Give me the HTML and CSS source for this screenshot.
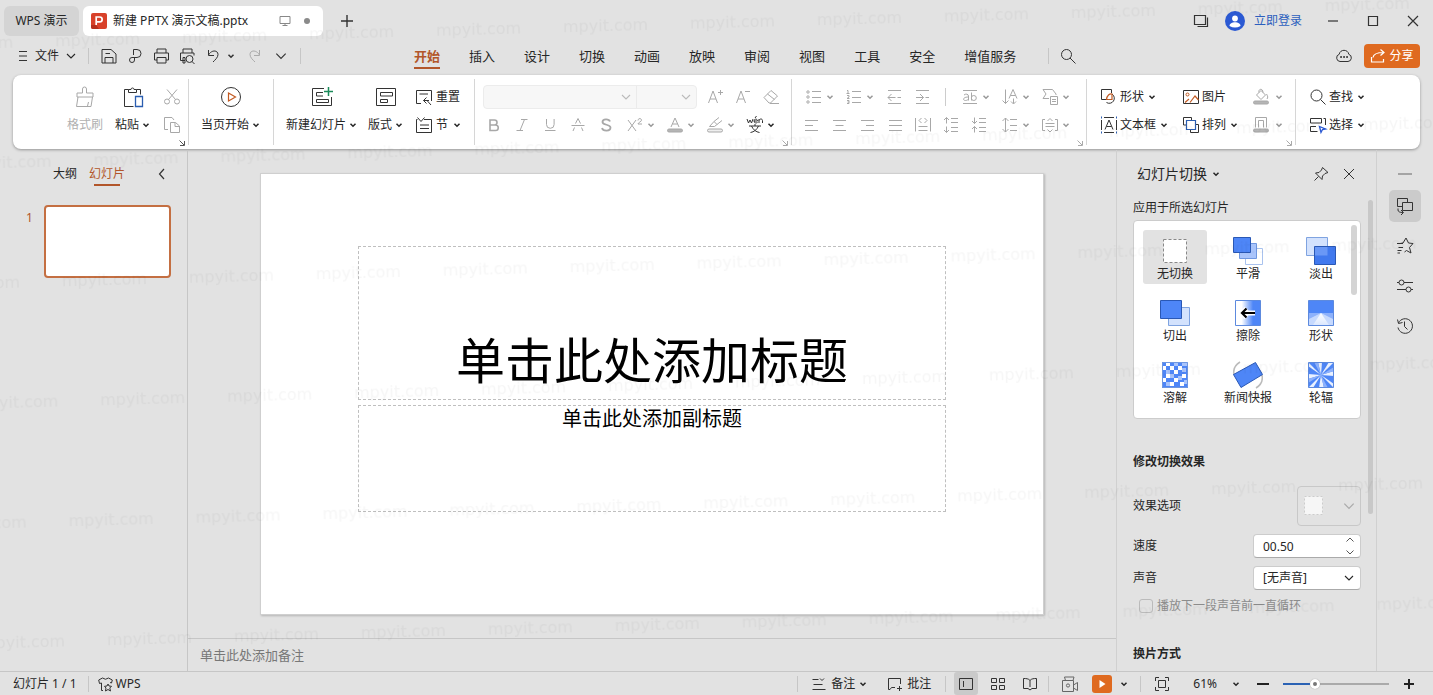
FILE: index.html
```html
<!DOCTYPE html>
<html lang="zh-CN">
<head>
<meta charset="utf-8">
<title>新建 PPTX 演示文稿.pptx - WPS 演示</title>
<link rel="stylesheet" href="styles.css">
</head>
<body>
<svg class="defs" aria-hidden="true">
  <symbol id="caret" viewBox="0 0 8 8"><path d="M1.5 2.7 4 5.2 6.5 2.7" fill="none" stroke="currentColor" stroke-width="1.5"/></symbol>
  <symbol id="chevron" viewBox="0 0 12 12"><path d="M2 4 6 8 10 4" fill="none" stroke="currentColor" stroke-width="1.1"/></symbol>
  <symbol id="launcher" viewBox="0 0 8 8"><path d="M1.5 1.5 6 6M6.5 2v4.5H2" fill="none" stroke="currentColor"/></symbol>
</svg>

<header class="titlebar">
  <button class="home-tab">WPS 演示</button>
  <div class="doc-tab">
    <svg class="logo" viewBox="0 0 16 16"><rect width="16" height="16" rx="2" fill="#d8412a"/><path d="M0 12h5l3 4H2a2 2 0 0 1-2-2z" fill="#b52f1d"/><path d="M5.2 12V4h3.5a2.4 2.4 0 0 1 0 4.9H5.2" fill="none" stroke="#fff" stroke-width="1.7"/></svg>
    <span class="doc-name">新建 PPTX 演示文稿.pptx</span>
    <svg class="monitor" viewBox="0 0 12 12"><path d="M1 1.5h10v7H1zM6 8.500v2M3.500 10.500h5" fill="none" stroke="#888"/></svg>
    <span class="unsaved"></span>
  </div>
  <button class="ico-btn new-tab" aria-label="新建标签"><svg class="i16" viewBox="0 0 16 16"><path d="M8 2v12M2 8h12" stroke="#333" stroke-width="1.4"/></svg></button>
  <span class="grow"></span>
  <button class="ico-btn" aria-label="窗口"><svg class="i20" viewBox="0 0 20 20"><path d="M3.500 4.500h11v9h-11zM6.500 15.500h10v-9" fill="none" stroke="#333" stroke-width="1.2"/></svg></button>
  <a class="login" href="#"><svg class="i20" viewBox="0 0 20 20"><circle cx="10" cy="10" r="10" fill="#2b59d3"/><circle cx="10" cy="7.500" r="2.900" fill="#fff"/><path d="M4.500 15c0-5 11-5 11 0q-5.500 3-11 0" fill="#fff"/></svg>立即登录</a>
  <button class="ico-btn win" aria-label="最小化"><svg class="i20" viewBox="0 0 20 20"><path d="M5 10h10" stroke="#333" stroke-width="1.200"/></svg></button>
  <button class="ico-btn win" aria-label="最大化"><svg class="i20" viewBox="0 0 20 20"><path d="M5.500 5.500h9v9h-9z" fill="none" stroke="#333" stroke-width="1.200"/></svg></button>
  <button class="ico-btn win" aria-label="关闭"><svg class="i20" viewBox="0 0 20 20"><path d="m5 5 10 10M15 5 5 15" stroke="#333" stroke-width="1.200"/></svg></button>
</header>

<nav class="menubar">
  <button class="file-menu"><svg class="i12" viewBox="0 0 12 12"><path d="M2 1.500h8M2 6h8M2 10.500h8" stroke="#333"/></svg>文件<svg class="i12"><use href="#chevron"/></svg></button>
  <span class="vline"></span>
  <div class="quick">
    <button class="q" aria-label="保存"><svg class="i20" viewBox="0 0 20 20"><path d="M3 3.500h9l5 4.500v9H3zM6 17v-5.500h8V17M6.500 7.500H11" /></svg></button>
    <button class="q" aria-label="输出为PDF"><svg class="i20" viewBox="0 0 20 20"><path d="M8.500 9V3.500H12a4 4 0 0 1 0 8H7a2.500 2.500 0 1 0 2.500 2.500v-2.500"/></svg></button>
    <button class="q" aria-label="打印"><svg class="i20" viewBox="0 0 20 20"><path d="M6 7V3h9v4M6 14H3.500V7h14v7H15M6 11.500h9V17H6z"/></svg></button>
    <button class="q" aria-label="打印预览"><svg class="i20" viewBox="0 0 20 20"><path d="M6 7V3h9v4M8 14.500H3.500V7h13.500v2.500M6 11.500h2V17H6v-5.500"/><circle cx="12.500" cy="13" r="3.500"/><path d="m15 15.500 2.500 2.500"/></svg></button>
    <button class="q" aria-label="撤销"><svg class="i20" viewBox="0 0 20 20"><path d="M5.500 4v5.500H11M5.500 9c3-5.500 9.500-5 9.500-.5 0 3-3 5.500-5 7.500"/></svg></button>
    <svg class="caret"><use href="#caret"/></svg>
    <button class="q dim redo" aria-label="恢复"><svg class="i20" viewBox="0 0 20 20"><path d="M14.500 4v5.500H9M14.500 9C11.500 3.500 5 4 5 8.500c0 3 3 5.500 5 7.500"/></svg></button>
    <button class="q" aria-label="更多"><svg class="i14" viewBox="0 0 12 12"><path d="M2 4 6 8 10 4"/></svg></button>
  </div>
  <span class="vline"></span>
  <div class="tabs">
    <button class="tab active">开始</button><button class="tab">插入</button><button class="tab">设计</button><button class="tab">切换</button><button class="tab">动画</button><button class="tab">放映</button><button class="tab">审阅</button><button class="tab">视图</button><button class="tab">工具</button><button class="tab">安全</button><button class="tab">增值服务</button>
  </div>
  <span class="vline tabs-end"></span>
  <button class="ico-btn" aria-label="搜索"><svg class="i20 line" viewBox="0 0 20 20"><circle cx="8.500" cy="8.500" r="5"/><path d="m12 12 5.500 5.500"/></svg></button>
  <span class="grow"></span>
  <button class="ico-btn" aria-label="云状态"><svg class="i20 line" viewBox="0 0 20 20"><path d="M6 15.500a3.700 3.700 0 0 1-.8-7.200C6 3 14 3 14.800 8.300a3.700 3.700 0 0 1-.8 7.200z"/><path d="M6.300 11h1.500M9.300 11h1.500M12.300 11h1.500" stroke-width="1.800"/></svg></button>
  <button class="share"><svg class="i16" viewBox="0 0 16 16"><path d="M1.500 9v5h12v-3M3 9.500C3.500 6 7 4.500 13.500 4.500M10.500 1.500l3.500 3-3.500 3" fill="none" stroke="#fff" stroke-width="1.200"/></svg>分享</button>
</nav>

<section class="ribbon" aria-label="开始">
  <div class="group g-clip">
    <button class="big dim" disabled><svg class="i24" viewBox="0 0 24 24"><path d="M9.500 8V4a2 2 0 0 1 4 0v4H20v4H4V8zM5 12l-1.500 9.500H18l1.500-9.500M15.500 17l-1 4"/></svg><span>格式刷</span></button>
    <button class="big paste"><svg class="i24" viewBox="0 0 24 24"><path d="M7.500 4.500h-4v17h9M15.500 4.500h4v5"/><path d="M7.500 7.500v-3h2.500a1.500 1.500 0 0 1 3 0h2.500v3z"/><path d="M14.500 11.500h7v10h-7z" stroke="#2a5db0" stroke-width="1.300"/></svg><span>粘贴<svg class="caret"><use href="#caret"/></svg></span></button>
    <div class="stack">
      <button class="s dim" disabled aria-label="剪切"><svg class="i20" viewBox="0 0 20 20"><circle cx="5" cy="14.500" r="2.500"/><circle cx="15" cy="14.500" r="2.500"/><path d="M5 2.500 13.500 12.500M15 2.500 6.500 12.500"/></svg></button>
      <button class="s dim" disabled aria-label="复制"><svg class="i20" viewBox="0 0 20 20"><path d="M6 14.500H2.500v-12H10l2 2.500M8.500 7.500h5l4 3.500v6.500h-9zM13 7.500v4h4.500"/></svg></button>
    </div>
    <svg class="launch dark"><use href="#launcher"/></svg>
  </div>
  <div class="group g-play">
    <button class="big"><svg class="i24" viewBox="0 0 24 24"><circle cx="12" cy="12" r="9.500"/><path d="M9.500 8v8l7-4z" stroke="#c25a22" stroke-width="1.200"/></svg><span>当页开始<svg class="caret"><use href="#caret"/></svg></span></button>
  </div>
  <div class="group g-slide">
    <button class="big"><svg class="i24" viewBox="0 0 24 24"><path d="M14 3.500H2.500v17h19V12"/><path d="M13 7.500H6.500v3.500H13M17 14.500H6.500v3h12v-3z"/><path d="M18.500 2v9M14 6.500h9" stroke="#1b8a5a" stroke-width="1.500"/></svg><span>新建幻灯片<svg class="caret"><use href="#caret"/></svg></span></button>
    <button class="big"><svg class="i24" viewBox="0 0 24 24"><path d="M2.500 3.500h19v17h-19z"/><path d="M6.500 7.500h12v3.500h-12zM6.500 14.500h7v3h-7z"/></svg><span>版式<svg class="caret"><use href="#caret"/></svg></span></button>
    <div class="stack">
      <button class="row-btn"><svg class="i20" viewBox="0 0 20 20"><path d="M7 16.500H2.500v-13h15V14M5.500 7H14"/><path d="m17 18-4-4.500M9.500 13.500H15M9.500 13.500l3-3M9.500 13.500l3 3"/></svg>重置</button>
      <button class="row-btn"><svg class="i20" viewBox="0 0 20 20"><path d="M3.500 4.500h-1v13h15v-13H10M6 10h9M6 13.500h9M3.500 2.500l3.500 4 3.500-4"/></svg>节<svg class="caret"><use href="#caret"/></svg></button>
    </div>
  </div>
  <div class="group g-font">
    <div class="row">
      <div class="fonts"><select class="combo wide" aria-label="字体" disabled><option></option></select><svg class="i12"><use href="#chevron"/></svg><select class="combo" aria-label="字号" disabled><option></option></select><svg class="i12"><use href="#chevron"/></svg></div>
      <button class="s dim" disabled aria-label="增大字号"><svg class="i20" viewBox="0 0 20 20"><path d="m3.500 16 4.500-12 4.500 12M5 12h6M13 5.500h5M15.500 3v5"/></svg></button>
      <button class="s dim" disabled aria-label="减小字号"><svg class="i20" viewBox="0 0 20 20"><path d="m3.500 16 4.500-12 4.500 12M5 12h6M12 4.500h5"/></svg></button>
      <button class="s dim" disabled aria-label="清除格式"><svg class="i20" viewBox="0 0 20 20"><path d="m3 10.500 7-7 6.500 5.500-7 7H8zM6.500 7l7 5.500M9 16.500h9"/></svg></button>
    </div>
    <div class="row">
      <button class="s dim" disabled aria-label="加粗"><svg class="i20" viewBox="0 0 20 20"><path d="M6 5h4.500a2.400 2.400 0 0 1 0 5H6zM6 10h5.500a2.500 2.500 0 0 1 0 5.500H6z" stroke-width="1.600"/></svg></button>
      <button class="s dim" disabled aria-label="倾斜"><svg class="i20" viewBox="0 0 20 20"><path d="M9 4.500h6.500M4.500 15.500H11M12.500 4.500 8 15.500"/></svg></button>
      <button class="s dim" disabled aria-label="下划线"><svg class="i20" viewBox="0 0 20 20"><path d="M6.500 4v5.500a3.800 3.800 0 0 0 7.600 0V4M5 15.500h10.500"/></svg></button>
      <button class="s dim" disabled aria-label="删除线"><svg class="i20" viewBox="0 0 20 20"><path d="M3.500 10.500h13M7.500 8.500l2.500-5 2.500 5M6.500 12.500 5 16M13.500 12.500l1.500 3.500"/></svg></button>
      <button class="s dim" disabled aria-label="阴影"><svg class="i20" viewBox="0 0 20 20"><path d="M14 6.500C13 3.500 6.500 3.500 6.500 7c0 3.500 8 2 8 5.500 0 4-7.500 4-8.500.5" stroke-width="1.800"/></svg></button>
      <button class="m dim" disabled aria-label="上标"><svg class="i20" viewBox="0 0 20 20"><path d="m3 5 8 11M11 5 3 16M13 5.500c0-2.500 3.500-2.500 3.500-.3 0 1.500-3.500 2.300-3.500 3.800H17"/></svg><svg class="caret"><use href="#caret"/></svg></button>
      <button class="m dim" disabled aria-label="字体颜色"><svg class="i20" viewBox="0 0 20 20"><path d="m6 12 4-9 4 9M7.500 9h5"/><rect x="2.500" y="14" width="15" height="3" rx="1.500" fill="#b5b5b5"/></svg><svg class="caret"><use href="#caret"/></svg></button>
      <button class="m dim" disabled aria-label="突出显示"><svg class="i20" viewBox="0 0 20 20"><path d="M4.500 11.500 9 6.500l3 3-2.500 2zM9 6.500l5-4M12 9.500l5-4"/><rect x="2.500" y="14" width="15" height="3" rx="1.500" fill="#eee"/></svg><svg class="caret"><use href="#caret"/></svg></button>
      <button class="m" aria-label="拼音指南"><svg class="i20" viewBox="0 0 20 20"><path d="m2 4 1.500 4L5 5l1.500 3L8 4M9 6h3.500c0-2.500-3.500-2.500-3.500 0s3 2 3.500 1.500M14 8V4M14 5.500c.5-2 3.500-2 3.500 0V8M10 3l1.500-2M4 11h12M10 9v2M13.500 11C12 14.500 9 17 5.500 17.500M6.500 11c1.500 3.500 4.500 6 8 6.500"/></svg><svg class="caret"><use href="#caret"/></svg></button>
    </div>
    <svg class="launch"><use href="#launcher"/></svg>
  </div>
  <div class="group g-para dim">
    <div class="row first">
      <button class="m" disabled aria-label="项目符号"><svg class="i20" viewBox="0 0 20 20"><circle cx="4" cy="5" r="1.200"/><circle cx="4" cy="10" r="1.200"/><circle cx="4" cy="15" r="1.200"/><path d="M8 4.500h9M8 10.500h9M8 15.500h9"/></svg><svg class="caret"><use href="#caret"/></svg></button>
      <button class="m" disabled aria-label="编号"><svg class="i20" viewBox="0 0 20 20"><path d="M3 3.500h1v3M2.500 6.500h3M3 8.500h2v1.500L3 11.500h2.500M3 13.500h2v3H3M3.500 15H5M8 4.500h9M8 10.500h9M8 15.500h9"/></svg><svg class="caret"><use href="#caret"/></svg></button>
      <button class="s" disabled aria-label="减少缩进"><svg class="i20" viewBox="0 0 20 20"><path d="M5 3.500h13M5 16.500h13M5 10.500h7.500M14.500 10.500H18M8.500 7 5 10.500 8.500 14"/></svg></button>
      <button class="s" disabled aria-label="增加缩进"><svg class="i20" viewBox="0 0 20 20"><path d="M5 3.500h13M5 16.500h13M5 10.500h7.500M14.500 10.500H18M9 7l3.500 3.500L9 14"/></svg></button>
      <span class="sep"></span>
      <button class="m" disabled aria-label="文字间距"><svg class="i20" viewBox="0 0 20 20"><path d="M3 3.500h14M3 16.500h14M4 8c1.500-1.500 4.500-1 4.500 1v4.500M8.500 10c-6 0-6 3.500-3 3.500 1.500 0 3-1 3-2M11.500 5.500v8"/><circle cx="13.800" cy="11" r="2.500"/></svg><svg class="caret"><use href="#caret"/></svg></button>
      <button class="m" disabled aria-label="文字方向"><svg class="i20" viewBox="0 0 20 20"><path d="M5.500 2.500v14M2.500 13.500l3 3 3-3M9 11.500l4-9 4 9M10.500 8.500h5M13.500 11.500v5M11 14.500l2.500 2.500 2.500-2.500"/></svg><svg class="caret"><use href="#caret"/></svg></button>
      <button class="m" disabled aria-label="转智能图形"><svg class="i20" viewBox="0 0 20 20"><path d="M9 11.500H3L6 7 3 2.500h9.500L16 7v1M10.500 9.500h7v8h-7zM12 12.500h4M12 14.500h4"/></svg><svg class="caret"><use href="#caret"/></svg></button>
    </div>
    <div class="row">
      <div class="aligns">
      <button class="s" disabled aria-label="左对齐"><svg class="i20" viewBox="0 0 20 20"><path d="M4 5.500h13M4 10.500h8M4 15.500h13"/></svg></button>
      <button class="s" disabled aria-label="居中"><svg class="i20" viewBox="0 0 20 20"><path d="M4 5.500h13M6.500 10.500h8M4 15.500h13"/></svg></button>
      <button class="s" disabled aria-label="右对齐"><svg class="i20" viewBox="0 0 20 20"><path d="M4 5.500h13M9 10.500h8M4 15.500h13"/></svg></button>
      <button class="s" disabled aria-label="两端对齐"><svg class="i20" viewBox="0 0 20 20"><path d="M4 5.500h13M4 10.500h13M4 15.500h13"/></svg></button>
      <button class="s" disabled aria-label="分散对齐"><svg class="i20" viewBox="0 0 20 20"><path d="M2.500 3v13.500M17.500 3v13.500M5.500 11.500h9M5.500 15.500h9M8.500 3 6 5.500 8.500 8M11.500 3 14 5.500 11.500 8"/></svg></button>
      <button class="s" disabled aria-label="增大段间距"><svg class="i20" viewBox="0 0 20 20"><path d="M5.500 8.500v-6M3 5l2.500-2.500L8 5M5.500 11.500v6M3 15l2.500 2.500L8 15M10 3.500h7M10 7.500h7M10 12.500h7M10 16.500h7"/></svg></button>
      <button class="s" disabled aria-label="减小段间距"><svg class="i20" viewBox="0 0 20 20"><path d="M5.500 2.500v6M3 6l2.500 2.500L8 6M5.500 17.500v-6M3 14l2.500-2.500L8 14M10 3.500h7M10 7.500h7M10 12.500h7M10 16.500h7"/></svg></button>
      </div>
      <button class="m" disabled aria-label="行距"><svg class="i20" viewBox="0 0 20 20"><path d="M5.500 3v14M2.500 6l3-3 3 3M2.500 14l3 3 3-3M10 4.500h7M10 10.500h7M10 15.500h7"/></svg><svg class="caret"><use href="#caret"/></svg></button>
      <button class="m" disabled aria-label="对齐文本"><svg class="i20" viewBox="0 0 20 20"><path d="M5 4.500H2.500v11H5M15 4.500h2.500v11H15M5.500 8.500h9M5.500 11.500h9M7.500 6 10 3.500 12.500 6M7.500 14.500l2.500 2.500 2.500-2.500"/></svg><svg class="caret"><use href="#caret"/></svg></button>
    </div>
    <svg class="launch"><use href="#launcher"/></svg>
  </div>
  <div class="group g-draw">
    <button class="row-btn"><svg class="i20" viewBox="0 0 20 20"><path d="M7 12.500H2.500v-10h10V6M13 7a5 5 0 1 1-5.500 8.500"/><path d="M7.500 12.500c.5-4 3-6 5.500-5.500v5.500z" stroke="#c25a22" stroke-width="1.200"/></svg>形状<svg class="caret"><use href="#caret"/></svg></button>
    <button class="row-btn"><svg class="i20" viewBox="0 0 20 20"><path d="M2.500 3.500h15v13h-15z"/><circle cx="6.500" cy="7.500" r="1.500" stroke="#c25a22"/><path d="m4 15.500 4-3.500M9 15.500l5-6.500 3.500 4" stroke="#c25a22" stroke-width="1.200"/></svg>图片</button>
    <button class="row-btn dim" disabled aria-label="填充"><svg class="i20" viewBox="0 0 20 20"><path d="m5.500 8 4.500-4.500L14.500 8l-4.500 4.500zM8 5.500C7 1.500 12 1 12 5.500M15.500 7c1.500 2.500 1.500 3.500.5 5"/><rect x="2.500" y="14" width="15" height="3" rx="1.500" fill="#b5b5b5"/></svg><svg class="caret"><use href="#caret"/></svg></button>
    <button class="row-btn"><svg class="i20" viewBox="0 0 20 20"><path d="M2.500 5v10M17.500 5v10M5 2.500h10M5 17.500h10M6 14.500l4-9.500 4 9.500M7.500 11.500h5"/><path d="M2 2.500h1M17 2.500h1M2 17.500h1M17 17.500h1" stroke="#2a5db0" stroke-width="2"/></svg>文本框<svg class="caret"><use href="#caret"/></svg></button>
    <button class="row-btn"><svg class="i20" viewBox="0 0 20 20"><path d="M5 10H2.500V2.500h8V5M15 9.500h2.500v8h-8V15"/><path d="M5.500 5.500h9v9h-9z" stroke="#2a5db0" stroke-width="1.200"/></svg>排列<svg class="caret"><use href="#caret"/></svg></button>
    <button class="row-btn dim" disabled aria-label="轮廓"><svg class="i20" viewBox="0 0 20 20"><path d="M4.500 12.500v-10h11v10M7.500 12.500v-7h5v7"/><rect x="2.500" y="14" width="15" height="3" rx="1.500" fill="#b5b5b5"/></svg><svg class="caret"><use href="#caret"/></svg></button>
    <svg class="launch"><use href="#launcher"/></svg>
  </div>
  <div class="group g-find">
    <button class="row-btn"><svg class="i20" viewBox="0 0 20 20"><circle cx="8.500" cy="8.500" r="5.500"/><path d="m12.500 12.500 5 5"/></svg>查找<svg class="caret"><use href="#caret"/></svg></button>
    <button class="row-btn"><svg class="i20" viewBox="0 0 20 20"><path d="M2.500 8V3.500h11V8zM15.500 3.500h2V10M9.500 16.500h-7v-5h5.500"/><path d="m11.500 11.500 1.500 6 1.500-3 3-.500z" stroke="#2b59d3" stroke-width="1.300"/></svg>选择<svg class="caret"><use href="#caret"/></svg></button>
  </div>
</section>

<main class="work">
  <aside class="outline">
    <div class="outline-tabs"><button>大纲</button><button class="on">幻灯片</button><span class="grow"></span><button class="fold" aria-label="收起"><svg class="i12" viewBox="0 0 12 12"><path d="M8 1 3.500 6 8 11" fill="none" stroke="#333" stroke-width="1.200"/></svg></button></div>
    <div class="thumb-row"><span>1</span><button class="thumb" aria-label="幻灯片 1"></button></div>
  </aside>

  <section class="stage">
    <div class="canvas">
      <div class="slide">
        <div class="holder title-holder"><h1>单击此处添加标题</h1></div>
        <div class="holder sub-holder"><p>单击此处添加副标题</p></div>
      </div>
    </div>
    <div class="notes">单击此处添加备注</div>
  </section>

  <aside class="pane">
    <div class="pane-head"><button class="pane-title">幻灯片切换<svg class="caret"><use href="#caret"/></svg></button><span class="grow"></span>
      <button class="ico-btn" aria-label="固定"><svg class="i20 line" viewBox="0 0 20 20"><path d="m11.500 3.500 5.500 5-3 1-2.500 2.500-.500 3.500-6.500-6.500 3.500-.500 2.500-2.500zM7.500 12.500l-4 4"/></svg></button>
      <button class="ico-btn" aria-label="关闭窗格"><svg class="i20 line" viewBox="0 0 20 20"><path d="m5 5 10 10M15 5 5 15"/></svg></button></div>
    <div class="pane-body">
      <div class="pane-main">
        <div class="apply">应用于所选幻灯片</div>
        <div class="effects">
          <div class="effect-grid">
            <button class="fx on"><svg class="i30" viewBox="0 0 30 30"><path d="M3.500 3.500h23v23h-23z" fill="#fff" stroke="#888" stroke-dasharray="3 2"/></svg>无切换</button>
            <button class="fx"><svg class="i30" viewBox="0 0 30 30"><path d="M12.500 12.500h17v16h-17z" fill="#fff" stroke="#a9c2ee"/><path d="M6.500 7.500h17v15h-17z" fill="#a9c4fb" stroke="#6f97e0"/><path d="M.500 1.500h17v15H.500z" fill="#4e86f7" stroke="#2a58b5"/></svg>平滑</button>
            <button class="fx"><svg class="i30" viewBox="0 0 30 30"><path d="M.500 1.500h21v18H.500z" fill="#d3e2fd" stroke="#7fa3e0"/><path d="M8.500 10.500h21v18h-21z" fill="#4179ee" stroke="#2a58b5"/><path d="M9 11h12.500v8.500H9z" fill="#6a98f6"/></svg>淡出</button>
            <button class="fx"><svg class="i30" viewBox="0 0 30 30"><path d="M8.500 9.500h21v18h-21z" fill="#d3e2fd" stroke="#7fa3e0"/><path d="M.500 2.500h21v18H.500z" fill="#4e86f7" stroke="#2a58b5"/></svg>切出</button>
            <button class="fx"><svg class="i30" viewBox="0 0 30 30"><defs><linearGradient id="wipe"><stop offset=".25" stop-color="#fff"/><stop offset=".7" stop-color="#4e86f7"/></linearGradient></defs><path d="M2.500 2.500h25v25h-25z" fill="url(#wipe)" stroke="#5d8ade"/><path d="M22 15H10M13.500 10.500 9 15l4.500 4.500" fill="none" stroke="#fff" stroke-width="5"/><path d="M22 15H10M13.500 10.500 9 15l4.500 4.500" fill="none" stroke="#000" stroke-width="2.200"/></svg>擦除</button>
            <button class="fx"><svg class="i30" viewBox="0 0 30 30"><defs><linearGradient id="fan" x2="0" y2="1"><stop offset="0" stop-color="#fff"/><stop offset="1" stop-color="#dbe7fe"/></linearGradient></defs><path d="M2.500 2.500h25v25h-25z" fill="#4e86f7" stroke="#5d8ade"/><path d="M3 15h24v12H3z" fill="#8db1fb"/><path d="M15 15 3 21v6h24v-6z" fill="#c6d9fe"/><path d="M15 15 7 27h16z" fill="url(#fan)"/></svg>形状</button>
            <button class="fx"><svg class="i30" viewBox="0 0 30 30"><path d="M2 2h26v26H2z" fill="#4e86f7"/><path d="M6 2h4v4H6zM2 6h4v4H2zM10 6h4v4h-4zM18 6h4v4h-4zM14 10h4v4h-4zM6 14h4v4H6zM22 14h4v4h-4zM14 18h4v4h-4zM2 18h4v4H2zM10 22h4v4h-4zM20 22h4v4h-4z" fill="#fff"/><path d="M14 2h4v4h-4zM22 2h6v4h-6zM6 10h4v4H6zM22 8h4v4h-4zM10 14h4v4h-4zM18 16h4v4h-4zM6 22h4v4H6zM24 20h4v4h-4z" fill="#a9c4fb"/><path d="M2.500 2.500h25v25h-25z" fill="none" stroke="#6f97e0"/></svg>溶解</button>
            <button class="fx"><svg class="i30" viewBox="0 0 30 30"><path d="M7 2C2 5 0 10 1 15M23 28c5-3 7-8 6-13" fill="none" stroke="#bbb" stroke-width="1.500"/><path d="M.500 14.500 22.500 2.500l7 12L8 27.500z" fill="#4e86f7" stroke="#2a58b5"/></svg>新闻快报</button>
            <button class="fx"><svg class="i30" viewBox="0 0 30 30"><path d="M2.500 2.500h25v25h-25z" fill="#4e86f7"/><path d="M15 15 12 2h4zM15 15 23 2h5zM15 15 28 11v5zM15 15 28 24v4zM15 15 18 28h-5zM15 15 7 28H2zM15 15 2 19v-5zM15 15 2 6V2z" fill="#eaf1ff"/><path d="M15 15 12 2H8zM15 15 28 11V7zM15 15l3 13h4zM15 15 2 19v4z" fill="#8db1fb"/><path d="M2.500 2.500h25v25h-25z" fill="none" stroke="#5d8ade"/></svg>轮辐</button>
          </div>
          <span class="bar inner"></span>
        </div>
        <h2 class="mod">修改切换效果</h2>
        <div class="field"><span>效果选项</span><button class="opt" disabled aria-label="效果选项"><svg class="i24" viewBox="0 0 24 24"><path d="M2.500 2.500h18v18h-18z" fill="#f6f6f6" stroke="#ccc" stroke-dasharray="2 2"/></svg><svg class="i14"><use href="#chevron"/></svg></button></div>
        <div class="field"><label for="speed">速度</label><div class="box"><input id="speed" value="00.50"><svg class="spin" viewBox="0 0 10 20"><path d="M1.500 5.500 5 2l3.500 3.500M1.500 14.500 5 18l3.500-3.500" fill="none" stroke="#555"/></svg></div></div>
        <div class="field"><label for="sound">声音</label><div class="box"><select id="sound"><option>[无声音]</option></select><svg class="i12"><use href="#chevron"/></svg></div></div>
        <label class="loop"><input type="checkbox" disabled>播放下一段声音前一直循环</label>
        <h2 class="way">换片方式</h2>
      </div>
      <span class="bar outer"></span>
    </div>
  </aside>

  <nav class="rail">
    <button aria-label="折叠"><svg class="i20 line" viewBox="0 0 20 20"><path d="M3 10h14" stroke="#666"/></svg></button>
    <button class="on" aria-label="切换"><svg class="i20 line" viewBox="0 0 20 20"><path d="M7 10.500H2.500v-8h10v4M7.500 6.500h10v8h-10zM3 12.500v1.500q0 2.500 5 2.500M6 14l2.500 2.500L6 19"/></svg></button>
    <button aria-label="动画"><svg class="i20 line" viewBox="0 0 20 20"><path d="M5 7.500 8 7l3-5 2.500 5 4.500.500-3.500 4 1.500 5.500-4.500-2.500-2 1.500M2 7.500h6M3.500 11.500h4.500M2.500 14.500h4M2.500 17h2.500"/></svg></button>
    <button aria-label="属性"><svg class="i20 line" viewBox="0 0 20 20"><circle cx="6.500" cy="6.500" r="2.500"/><circle cx="13.500" cy="13.500" r="2.500"/><path d="M2 6.500h2M9 6.500h9M2 13.500h9M16 13.500h2"/></svg></button>
    <button aria-label="历史"><svg class="i20 line" viewBox="0 0 20 20"><path d="M3.500 7a7.300 7.300 0 1 1-.5 4.500M2.500 3.500 3.500 7.500 7.500 6.500M9.500 5.500V10.500l3 3"/></svg></button>
  </nav>
</main>

<footer class="status">
  <span class="page-no">幻灯片 1 / 1</span><span class="vline"></span>
  <button class="wps"><svg class="i16 line" viewBox="0 0 16 16"><path d="M5 14.500H3.500V7L1.500 7.500.700 4 4.500 2q3 2.500 6 0l3.800 2-.8 3-1.500-.500M10 8l1 2 2.500.300L11.800 12l.700 3-2.500-1.500L7.500 15l.500-3-1.500-1.700L9 10z"/></svg>WPS</button>
  <span class="grow"></span>
  <span class="vline"></span>
  <button class="st-note"><svg class="i16 line" viewBox="0 0 16 16"><path d="M1.500 3.500h6M2.500 8.500h9M1.500 13.500h13M9 2.500l2 2 2-2"/></svg>备注<svg class="caret"><use href="#caret"/></svg></button>
  <button class="st-comment"><svg class="i16 line" viewBox="0 0 16 16"><path d="M13.500 8V2.500h-12v11H3l1.500-2H8M12.500 10v5M10 12.500h5"/></svg>批注</button>
  <span class="vline"></span>
  <div class="views">
    <button class="on" aria-label="普通"><svg class="i16 line" viewBox="0 0 16 16"><path d="M1.500 2.500h13v11h-13zM5.500 5v6"/></svg></button>
    <button aria-label="浏览"><svg class="i16 line" viewBox="0 0 16 16"><path d="M1.500 2.500h5v4h-5zM9.500 2.500h5v4h-5zM1.500 9.500h5v4h-5zM9.500 9.500h5v4h-5z"/></svg></button>
    <button aria-label="阅读"><svg class="i16 line" viewBox="0 0 16 16"><path d="M8 4.500C6.500 2.500 4 2.500 1.500 2.500v10H6l2 1.500 2-1.500h4.500v-10c-2.500 0-5 0-6.500 2V11"/></svg></button>
  </div>
  <span class="vline"></span>
  <div class="show">
    <button aria-label="录制"><svg class="i18 line" viewBox="0 0 18 18"><path d="M4.500 5.500 3.500 2h9.500l-1 3.500M1.500 5.500h11v11h-11zM12.500 10l4-2.500v8l-4-2.500" stroke="#666"/><circle cx="7" cy="10.500" r="1.600" stroke="#666"/></svg></button>
    <button class="play" aria-label="放映"><svg class="i12" viewBox="0 0 12 12"><path d="M3.500 2v8L9.500 6z" fill="#fff"/></svg></button>
    <svg class="caret"><use href="#caret"/></svg>
  </div>
  <span class="vline"></span>
  <button class="fit" aria-label="适应窗口"><svg class="i16 line" viewBox="0 0 16 16"><path d="M1.500 5V1.500H5M11 1.500h3.500V5M1.500 11v3.500H5M14.500 11v3.500H11M4.500 4.500h7v7h-7z"/></svg></button>
  <button class="pct">61%<svg class="caret"><use href="#caret"/></svg></button>
  <button class="zoom-btn" aria-label="缩小"><svg class="i16" viewBox="0 0 16 16"><path d="M2 8h12" stroke="#222" stroke-width="2"/></svg></button>
  <input class="zoom" type="range" min="0" max="100" value="28" aria-label="缩放">
  <button class="zoom-btn" aria-label="放大"><svg class="i16" viewBox="0 0 16 16"><path d="M3 8h10M8 3v10" stroke="#222" stroke-width="2"/></svg></button>
</footer>

<svg class="watermark" aria-hidden="true">
  <defs><pattern id="wm" x="54" y="0" width="127" height="240" patternUnits="userSpaceOnUse" patternTransform="rotate(-1.600)"><text x="0" y="48">mpyit.com</text><text x="35" y="168">mpyit.com</text></pattern></defs>
  <rect width="100%" height="100%" fill="url(#wm)"/>
</svg>
</body>
</html>
```
FILE: styles.css
```css
* { box-sizing: border-box; }
body {
  margin: 0;
  height: 100vh;
  display: flex;
  flex-direction: column;
  overflow: hidden;
  background: #e2e2e2;
  color: #262626;
  font: 12px/16px "Noto Sans", "Noto Sans CJK SC", sans-serif;
}
button, input, select { font: inherit; color: inherit; margin: 0; }
button {
  display: inline-flex;
  align-items: center;
  justify-content: center;
  padding: 0;
  border: 0;
  background: none;
  white-space: nowrap;
}
svg { display: block; flex: none; }
h1, h2, p { margin: 0; font-weight: 400; }
.defs { position: absolute; width: 0; height: 0; }
.grow { flex: 1; }
.vline { width: 1px; height: 16px; background: #c6c6c6; flex: none; }
.caret { width: 8px; height: 8px; }
.i12 { width: 12px; height: 12px; }
.i14 { width: 14px; height: 14px; }
.i16 { width: 16px; height: 16px; }
.i18 { width: 18px; height: 18px; }
.i20 { width: 20px; height: 20px; }
.i24 { width: 24px; height: 24px; }
.i30 { width: 30px; height: 30px; }
.line, .q svg, .ribbon button > svg { fill: none; stroke: #333; stroke-width: 1; }
.ribbon button > .caret, .ribbon .caret { stroke: none; }
.ico-btn { width: 28px; height: 28px; }

/* Title bar */
.titlebar { display: flex; align-items: center; height: 41px; padding: 0 6px 0 4px; flex: none; }
.home-tab { width: 75px; height: 30px; border-radius: 6px; background: #d4d4d4; }
.doc-tab {
  display: flex;
  align-items: center;
  width: 240px;
  height: 30px;
  margin-left: 4px;
  padding: 0 13px 0 8px;
  border-radius: 6px;
  background: #fff;
}
.logo { width: 16px; height: 16px; margin-right: 6px; }
.doc-name { flex: 1; white-space: nowrap; }
.monitor { width: 12px; height: 12px; margin-right: 13px; }
.unsaved { width: 6px; height: 6px; border-radius: 50%; background: #8a8a8a; }
.new-tab { margin-left: 10px; }
.login { display: flex; align-items: center; gap: 9px; margin: 0 11px 0 10px; color: #2c5fbe; text-decoration: none; }
.win { width: 40px; }
.win:last-child { margin-right: -6px; }

/* Menu bar */
.menubar { display: flex; align-items: center; height: 30px; margin-bottom: 4px; padding: 0 13px 0 18px; flex: none; }
.file-menu { gap: 6px; width: 58px; margin-right: 12px; }
.quick { display: flex; align-items: center; margin: 0 6px 0 7px; color: #333; }
.q { width: 26px; height: 24px; }
.quick > .caret { margin: 0 7px 0 1px; }
.q:last-child { width: 26px; }
.q.dim svg { stroke: #aaa; }
.tabs { display: flex; gap: 29px; margin-left: 113px; }
.tab { height: 26px; border: solid transparent; border-width: 2px 0; font-size: 13px; }
.tab.active { color: #b2562a; font-weight: 700; border-bottom-color: #b2562a; }
.tabs-end { margin: 0 5px 0 32px; }
.share { gap: 3px; width: 56px; height: 24px; margin-left: 6px; border-radius: 4px; background: #df6a20; color: #fff; }

/* Ribbon */
.ribbon {
  display: grid;
  grid-template-columns: 176px 85px 201px 317px 295px 209px 1fr;
  flex: none;
  margin: 0 13px 1px;
  border-radius: 8px;
  background: #fff;
  box-shadow: 0 1px 3px rgba(0, 0, 0, .35);
}
.group { position: relative; height: 74px; padding-top: 8px; }
.group:not(:last-child) { background: linear-gradient(#d6d6d6, #d6d6d6) right 4px / 1px 66px no-repeat; }
.row { display: flex; align-items: center; height: 28px; }
.stack { display: grid; grid-template-rows: 28px 28px; justify-items: start; }
.big { display: grid; grid-template-rows: 28px 28px; place-items: center; }
.big span { display: flex; align-items: center; gap: 3px; }
.paste svg:first-child { margin-right: 4px; }
.s { width: 28px; height: 28px; }
.m { width: 40px; height: 28px; gap: 2px; padding-left: 5px; justify-content: flex-start; }
.row-btn { height: 28px; gap: 1px; justify-content: flex-start; }
.stack .row-btn { gap: 2px; }
.row-btn .caret { margin-left: 3px; }
.dim { color: #b0b0b0; }
.ribbon .dim svg, .ribbon button.dim > svg { stroke: #a8a8a8; }
.ribbon .dim .caret, .ribbon button.dim > .caret { stroke: none; color: #999; }
.launch { position: absolute; right: 3px; bottom: 2px; width: 8px; height: 8px; color: #aaa; }
.launch.dark { color: #555; }
.ribbon .launch { stroke: none; }
.g-clip { display: flex; gap: 12px; padding-left: 54px; }
.g-clip .stack { margin-left: -8px; }
.g-play { display: flex; padding-left: 12px; }
.g-slide { display: flex; gap: 11px; padding-left: 12px; }
.g-font { padding-left: 5px; }
.fonts {
  display: flex;
  align-items: center;
  width: 214px;
  height: 24px;
  margin: 0 4px 0 3px;
  padding-right: 4px;
  border: 1px solid #ececec;
  border-radius: 4px;
  background: #f7f7f7;
  color: #bbb;
}
.combo { appearance: none; width: 44px; height: 22px; padding: 0; border: 0; background: none; }
.combo.wide { width: 136px; }
.fonts .combo:not(.wide) { border-left: 1px solid #e6e6e6; margin-left: 4px; }
.g-para { padding-left: 5px; }
.first { padding-left: 2px; }
.aligns { display: flex; margin-right: 2px; }
.sep { width: 1px; height: 18px; margin: 0 9px 0 10px; background: #ccc; }
.g-draw { display: grid; grid-template-columns: 82px 70px auto; grid-template-rows: 28px 28px; padding-left: 12px; }
.g-find { display: grid; grid-template-rows: 28px 28px; justify-items: start; padding-left: 12px; }

/* Work area */
.work { display: grid; grid-template-columns: 188px 1fr 261px 56px; flex: 1; min-height: 0; }
.outline { padding: 14px 16px 0 26px; border-right: 1px solid #c6c6c6; }
.outline-tabs { display: flex; gap: 12px; height: 24px; padding: 0 3px 0 27px; align-items: flex-start; }
.outline-tabs button { height: 20px; }
.outline-tabs .on {
  height: 22px;
  padding-bottom: 2px;
  color: #b2562a;
  background: linear-gradient(#b2562a, #b2562a) center bottom / 26px 2px no-repeat;
}
.thumb-row { display: flex; gap: 11px; margin-top: 17px; color: #b2562a; }
.thumb-row span { padding-top: 5px; }
.thumb { flex: 1; height: 73px; border: 2px solid #c46f42; border-radius: 4px; background: #fff; }
.stage { display: flex; flex-direction: column; min-width: 0; }
.canvas { flex: 1; padding: 23px 72px 0; min-height: 0; }
.slide {
  display: flex;
  flex-direction: column;
  gap: 5px;
  aspect-ratio: 783 / 441;
  padding: 72px 97px 0;
  border: 1px solid #cfcfcf;
  background: #fff;
  box-shadow: 1px 1px 2px rgba(0, 0, 0, .2);
  color: #000;
}
.holder { display: flex; justify-content: center; border: 1px dashed #bfbfbf; }
.title-holder { height: 154px; align-items: flex-end; padding-bottom: 4px; }
.sub-holder { height: 107px; align-items: flex-start; }
.slide h1 { font-size: 49px; line-height: 70px; }
.slide p { font-size: 20px; line-height: 26px; }
.notes { height: 33px; padding: 6px 12px; border-top: 1px solid #c6c6c6; color: #777; font-size: 13px; line-height: 20px; }

/* Transition pane */
.pane { display: flex; flex-direction: column; border: solid #d0d0d0; border-width: 0 1px; min-height: 0; overflow: hidden; }
.pane-head { display: flex; align-items: center; height: 28px; margin-top: 10px; padding: 0 13px 0 20px; flex: none; }
.pane-title { gap: 5px; font-size: 14px; }
.pane-body { display: flex; gap: 7px; padding: 12px 3px 0 16px; flex: none; }
.pane-main { width: 228px; }
.apply { line-height: 16px; }
.effects { display: flex; margin-top: 4px; padding: 4px 3px 10px 9px; border: 1px solid #ccc; border-radius: 4px; background: #fff; }
.effect-grid { display: grid; grid-template-columns: 64px 64px 64px; gap: 8px 9px; padding-top: 5px; }
.fx { flex-direction: column; height: 54px; border-radius: 3px; justify-content: flex-end; padding-bottom: 2px; }
.fx.on { background: #e2e2e2; }
.bar { width: 6px; border-radius: 3px; background: #d4d4d4; }
.inner { height: 70px; margin-left: -2px; }
.outer { height: 314px; background: #c8c8c8; }
.pane h2 { font-size: 12px; font-weight: 700; }
.mod { margin: 35px 0 16px; }
.field { display: flex; align-items: center; justify-content: space-between; margin-bottom: 8px; }
.opt { width: 64px; height: 40px; padding: 0 4px; border: 1px solid #c8c8c8; border-radius: 4px; justify-content: space-between; color: #aaa; }
.box { display: flex; align-items: center; width: 108px; height: 24px; padding: 0 5px 0 9px; border: 1px solid #ccc; border-bottom-color: #aaa; border-radius: 4px; background: #fff; }
.box input, .box select { appearance: none; flex: 1; width: 40px; min-width: 0; height: 20px; padding: 0; border: 0; background: none; outline: 0; }
.spin { width: 10px; height: 20px; }
.loop { display: flex; align-items: center; gap: 4px; padding-left: 6px; color: #8c8c8c; }
.loop input { appearance: none; width: 14px; height: 14px; border: 1px solid #bbb; border-radius: 3px; }
.way { margin-top: 32px; }

.rail { display: flex; flex-direction: column; align-items: center; gap: 8px; }
.rail button { width: 32px; height: 32px; border-radius: 5px; }
.rail button:first-child { height: 24px; margin-top: 12px; margin-bottom: -4px; }
.rail .on { background: #cbcbcb; }

/* Status bar */
.status { display: flex; align-items: center; height: 24px; padding: 0 16px 0 13px; border-top: 1px solid #c6c6c6; flex: none; }
.page-no { margin-right: 11px; }
.wps { gap: 2px; margin-left: 9px; }
.st-note { gap: 4px; margin-left: 13px; }
.st-comment { gap: 4px; margin: 0 14px 0 20px; }
.views { display: flex; gap: 8px; margin: 0 6px 0 8px; }
.views button { width: 24px; height: 23px; border-radius: 3px; }
.views .on { background: #cacaca; }
.show { display: flex; align-items: center; margin: 0 12px; }
.play { width: 20px; height: 18px; margin: 0 8px 0 13px; border-radius: 3px; background: #df6a20; }
.fit { margin: 0 23px 0 13px; }
.pct { gap: 15px; margin-right: 15px; }
.zoom { appearance: none; width: 106px; height: 16px; margin: 0 12px; background: linear-gradient(90deg, #2b62b4 30%, #aaa 30%) center / 100% 2px no-repeat; }
.zoom::-webkit-slider-thumb { appearance: none; width: 10px; height: 10px; border: 3px solid #fff; border-radius: 50%; background: #777; box-shadow: 0 0 1px #888; }

.watermark { position: fixed; inset: 0; width: 100%; height: 100%; pointer-events: none; }
.watermark text { font: 16px "DejaVu Sans", sans-serif; fill: #000; fill-opacity: .035; }
```
